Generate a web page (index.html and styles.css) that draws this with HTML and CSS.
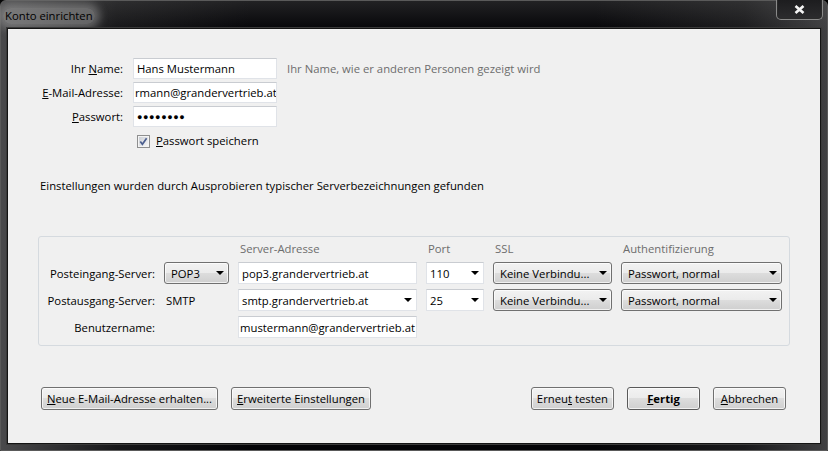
FILE: index.html
```html
<!DOCTYPE html>
<html lang="de">
<head>
  <meta charset="UTF-8">
  <title>Konto einrichten</title>
  <link rel="stylesheet" href="styles.css">
</head>
<body>
  <div class="window">
    <div class="titlebar">
      <span class="title">Konto einrichten</span>
      <div class="close">
        <svg width="11" height="9" viewBox="0 0 11 9">
          <path d="M1.5 1 L9.5 8 M9.5 1 L1.5 8" stroke="#f4f4f4" stroke-width="2.6" fill="none"/>
        </svg>
      </div>
    </div>

    <div class="client">
      <div class="account">
        <span class="label">Ihr <u>N</u>ame:</span>
        <div class="field">Hans Mustermann</div>
        <span class="hint">Ihr Name, wie er anderen Personen gezeigt wird</span>

        <span class="label"><u>E</u>-Mail-Adresse:</span>
        <div class="field tight">rmann@grandervertrieb.at</div>
        <span></span>

        <span class="label"><u>P</u>asswort:</span>
        <div class="field dots">&#9679;&#9679;&#9679;&#9679;&#9679;&#9679;&#9679;&#9679;</div>
        <span></span>
      </div>

      <div class="remember">
        <svg class="checkbox" width="13" height="13" viewBox="0 0 13 13">
          <defs>
            <linearGradient id="cb" x1="0" y1="0" x2="1" y2="1">
              <stop offset="0" stop-color="#cbcfd5"/>
              <stop offset="1" stop-color="#f7f7f7"/>
            </linearGradient>
          </defs>
          <rect x="0.5" y="0.5" width="12" height="12" fill="#f4f4f4" stroke="#8e8f8f"/>
          <rect x="2" y="2" width="9" height="9" fill="url(#cb)"/>
          <path d="M3.3 6.4 L5.4 9.2 L9.6 3.2" stroke="#4c5f8f" stroke-width="1.7" fill="none"/>
        </svg>
        <span><u>P</u>asswort speichern</span>
      </div>

      <p class="status">Einstellungen wurden durch Ausprobieren typischer Serverbezeichnungen gefunden</p>

      <div class="servers">
        <span></span>
        <span></span>
        <span class="head">Server-Adresse</span>
        <span class="head">Port</span>
        <span class="head">SSL</span>
        <span class="head">Authentifizierung</span>

        <span class="label">Posteingang-Server:</span>
        <div class="select">POP3</div>
        <div class="field">pop3.grandervertrieb.at</div>
        <div class="field combo">110</div>
        <div class="select">Keine Verbindu...</div>
        <div class="select">Passwort, normal</div>

        <span class="label">Postausgang-Server:</span>
        <span class="plain">SMTP</span>
        <div class="field combo">smtp.grandervertrieb.at</div>
        <div class="field combo">25</div>
        <div class="select">Keine Verbindu...</div>
        <div class="select">Passwort, normal</div>

        <span class="label">Benutzername:</span>
        <span></span>
        <div class="field tight">mustermann@grandervertrieb.at</div>
      </div>

      <div class="actions">
        <div class="group">
          <button class="btn"><u>N</u>eue E-Mail-Adresse erhalten...</button>
          <button class="btn"><u>E</u>rweiterte Einstellungen</button>
        </div>
        <div class="group">
          <button class="btn">Erneu<u>t</u> testen</button>
          <button class="btn default"><u>F</u>ertig</button>
          <button class="btn"><u>A</u>bbrechen</button>
        </div>
      </div>
    </div>
  </div>
</body>
</html>
```

FILE: styles.css
```css
body {
  margin: 0;
  background: #000;
  font-family: "Open Sans", "Noto Sans", sans-serif;
  font-size: 11.3px;
  color: #000;
}

.window {
  width: 828px;
  height: 451px;
  box-sizing: border-box;
  display: flex;
  flex-direction: column;
  border: 1px solid #5a5a5a;
  border-radius: 6px 6px 0 0;
  background:
    linear-gradient(180deg, rgba(90, 90, 90, 0.35), rgba(0, 0, 0, 0) 30px),
    linear-gradient(90deg, #4a4a4c 0%, #161618 14%, #040407 30%, #040407 72%, #1a1a1c 90%, #404042 100%);
}

.titlebar {
  height: 27px;
  display: flex;
  align-items: flex-start;
  padding: 0 4px 0 2px;
}

.title {
  margin-top: 7px;
  padding: 0 2px;
  line-height: 16px;
  color: #000;
  border-radius: 8px;
  background: rgba(175, 175, 175, 0.45);
  box-shadow: 0 0 8px 5px rgba(175, 175, 175, 0.45);
}

.close {
  margin-left: auto;
  margin-top: -2px;
  width: 47px;
  height: 21px;
  display: flex;
  align-items: center;
  justify-content: center;
  padding-top: 1px;
  box-sizing: border-box;
  border: 1px solid #8a8a8a;
  border-top: none;
  border-radius: 0 0 5px 5px;
  background: linear-gradient(180deg, #1c1c1e, #2c2c2e);
  box-shadow: inset 0 0 0 1px #2a2a2a;
}

.client {
  flex: 1;
  margin: 0 6px 6px 6px;
  border: 1px solid #141414;
  box-shadow: 0 0 0 1px #3a3a3a;
  background: #f0f0f0;
  padding: 29px 30px 0 20px;
}

/* Account fields */
.account {
  display: grid;
  grid-template-columns: 95px 144px auto;
  grid-auto-rows: 21px;
  column-gap: 10px;
  row-gap: 3px;
  align-items: center;
}

.label {
  text-align: right;
  white-space: nowrap;
}

.field {
  height: 100%;
  box-sizing: border-box;
  background: #fff;
  border: 1px solid #e0e3e8;
  border-top-color: #c9ccd1;
  padding: 0 3px;
  display: flex;
  align-items: center;
  white-space: nowrap;
  overflow: hidden;
}

.field.tight {
  padding: 0 0 0 1px;
}

.dots {
  font-size: 9px;
  letter-spacing: 0.6px;
}

.hint {
  color: #6d6d6d;
}

.remember {
  display: flex;
  align-items: center;
  gap: 6px;
  margin: 6px 0 0 109px;
  line-height: 16px;
}

.status {
  margin: 29px 0 0 12px;
  line-height: 16px;
}

/* Server settings */
.servers {
  margin: 42px 0 0 10px;
  border: 1px solid #d5dadf;
  border-radius: 3px;
  padding: 4px 7px 7px 0;
  display: grid;
  grid-template-columns: 116px 65px 179px 58px 119px 161px;
  grid-template-rows: 16px;
  grid-auto-rows: 22px;
  column-gap: 9px;
  row-gap: 5px;
  align-items: center;
}

.servers .head {
  color: #6d6d6d;
  padding-left: 2px;
  align-self: start;
}

.plain {
  padding-left: 2px;
}

.select {
  height: 100%;
  box-sizing: border-box;
  position: relative;
  display: flex;
  align-items: center;
  padding: 0 18px 0 6px;
  white-space: nowrap;
  border: 1px solid #707070;
  border-radius: 3px;
  background: linear-gradient(180deg, #f2f2f2 0%, #ebebeb 49%, #dddddd 50%, #cfcfcf 100%);
  box-shadow: inset 0 0 0 1px rgba(255, 255, 255, 0.7);
}

.select::after,
.combo::after {
  content: "";
  position: absolute;
  right: 4px;
  top: 50%;
  margin-top: -2px;
  border-top: 4px solid #000;
  border-left: 4px solid transparent;
  border-right: 4px solid transparent;
}

.combo {
  position: relative;
}

/* Buttons */
.actions {
  margin: 41px 4px 0 13px;
  display: flex;
  justify-content: space-between;
}

.group {
  display: flex;
  gap: 13px;
}

.btn {
  height: 23px;
  min-width: 73px;
  padding: 0 5px;
  font: inherit;
  color: #000;
  border: 1px solid #707070;
  border-radius: 3px;
  background: linear-gradient(180deg, #f2f2f2 0%, #ebebeb 49%, #dddddd 50%, #cfcfcf 100%);
  box-shadow: inset 0 0 0 1px rgba(255, 255, 255, 0.7);
}

.btn.default {
  font-weight: bold;
  border-color: #5a5a5a;
}
```
